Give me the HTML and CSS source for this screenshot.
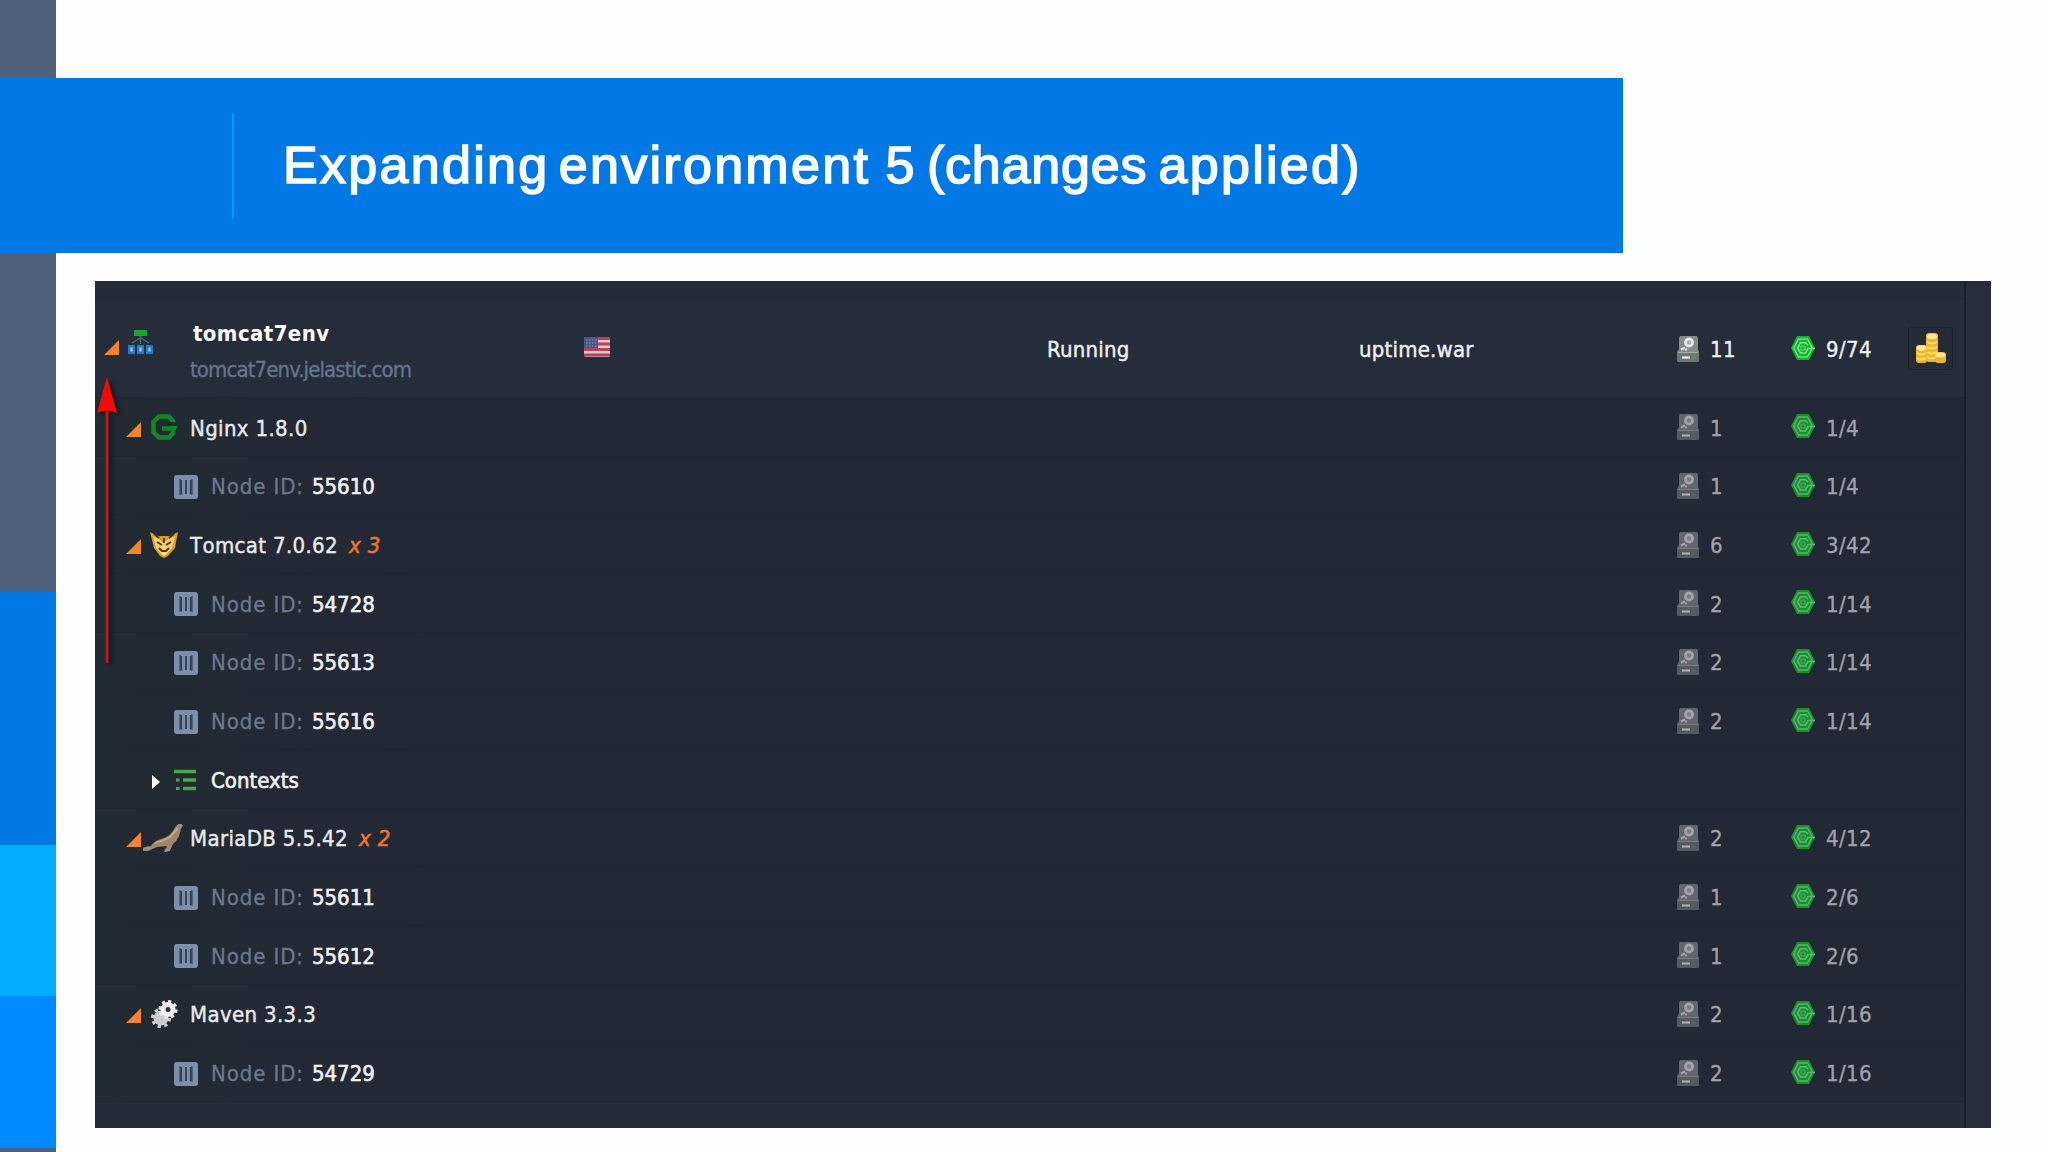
FILE: index.html
```html
<!DOCTYPE html>
<html lang="en">
<head>
  <meta charset="UTF-8" />
  <title>Expanding environment 5 (changes applied)</title>
  <link rel="stylesheet" href="styles.css">
</head>
<body>

  <svg class="defs">
    <symbol id="tri" viewBox="0 0 15 15"><path d="M15 0V15H0Z" fill="#f58426"/></symbol>
    <symbol id="node" viewBox="0 0 24 24">
      <rect width="24" height="24" rx="3" fill="#7d8fa9"/>
      <path d="M5 4H7V18Q7 20 9 20H5ZM19 4H17V18Q17 20 15 20H19Z" fill="#50617c"/>
      <path d="M7.2 5V19M12 5V19M16.8 5V19" stroke="#2f3e57" stroke-width="1.8"/>
    </symbol>
    <symbol id="disk" viewBox="0 0 22 26">
      <path d="M3 0H20L21 2V14L22 16V24Q22 26 20 26H2Q0 26 0 24V16L2 13V2Z" fill="#858a8e"/>
      <path d="M0 16H22V24Q22 26 20 26H2Q0 26 0 24Z" fill="#6f7777"/>
      <circle cx="12" cy="6.5" r="3.6" fill="#aaa" stroke="#e8eaec" stroke-width="2.6"/>
      <path d="M4 13.5L8 11.5M8 13.5H10" stroke="#e8eaec" stroke-width="2"/>
      <path d="M5 21.5H13" stroke="#fff" stroke-width="2"/>
      <path d="M1 16.5H21" stroke="#a5aba8" stroke-width="1"/>
      <path d="M16 21.5H19" stroke="#4e9a5e" stroke-width="2"/>
    </symbol>
    <symbol id="cloudlet" viewBox="0 0 24 24">
      <path d="M6 0H18L24 12L18 24H6L0 12Z" fill="#12b52b"/>
      <path d="M7.5 3H16.5L21.3 12L16.5 21H7.5L2.7 12Z" fill="none" stroke="#6fe07c" stroke-width="1.5"/>
      <path d="M17 9L14.5 6.7H9.5L6.5 12L9.5 17H14.5L17 12.5H24" fill="none" stroke="#7ee58a" stroke-width="1.6"/>
      <circle cx="12" cy="12" r="2.2" fill="none" stroke="#55cf63" stroke-width="1.3"/>
    </symbol>
  </svg>

  <aside class="stripes">
    <div class="stripe-slate"></div>
    <div class="stripe-blue"></div>
    <div class="stripe-cyan"></div>
    <div class="stripe-azure"></div>
  </aside>

  <main>
    <header class="banner">
      <h1>Expanding environment <span class="num">5</span> <span class="tight">(changes</span> applied)</h1>
    </header>

    <section class="panel">
      <div class="list">

        <div class="row env">
          <div class="name">
            <svg class="tri"><use href="#tri"/></svg>
            <svg class="env-icon" viewBox="0 0 25 24">
              <rect x="6" y="0" width="13" height="6" fill="#16a92b"/>
              <path d="M12.5 6V14M12 8L4 13M13 8L21 13" stroke="#5d6875" stroke-width="1.3"/>
              <g fill="#1e7fd2"><rect y="15" width="7" height="9"/><rect x="9" y="15" width="7" height="9"/><rect x="18" y="15" width="7" height="9"/></g>
              <path d="M3.5 17.5V21.5M12.5 17.5V21.5M21.5 17.5V21.5" stroke="#a9d3f3" stroke-width="2"/>
            </svg>
            <div class="env-name">
              <b>tomcat7env</b>
              <span>tomcat7env.jelastic.com</span>
            </div>
          </div>
          <div class="region">
            <svg class="flag" viewBox="0 0 26 20">
              <rect width="26" height="20" rx="2" fill="#e3c5cd"/>
              <path d="M0 1.5H26M0 7H26M0 12.5H26M0 18H26" stroke="#b8405a" stroke-width="2.8"/>
              <rect width="14" height="11" fill="#46598a"/>
              <path d="M2 3H13M2 6H13M2 9H13" stroke="#8292b4" stroke-width="1" stroke-dasharray="1.5 1.5"/>
            </svg>
          </div>
          <div class="status">Running</div>
          <div class="deployed">uptime.war</div>
          <div class="disk"><svg><use href="#disk"/></svg>11</div>
          <div class="cloudlets"><svg><use href="#cloudlet"/></svg>9/74</div>
          <button class="billing">
            <svg viewBox="0 0 30 30">
              <g fill="#edb62f"><rect x="10" y="0" width="12" height="29" rx="3"/><rect x="0" y="12" width="11" height="18" rx="3"/><rect x="19" y="19" width="11" height="11" rx="3"/></g>
              <g fill="#ffe796"><ellipse cx="16" cy="3.5" rx="5" ry="2.7"/><ellipse cx="5.5" cy="15" rx="5" ry="2.7"/><ellipse cx="24.5" cy="22" rx="5" ry="2.5"/></g>
              <path d="M11 9Q16 12 21 9M11 14Q16 17 21 14M11 19Q16 22 21 19M11 24Q16 27 20 24M1 20Q5 23 10 20M1 25Q5 28 10 25" fill="none" stroke="#ffdc71" stroke-width="1.8"/>
            </svg>
          </button>
        </div>

        <div class="row group">
          <div class="name">
            <svg class="tri"><use href="#tri"/></svg>
            <svg class="logo" viewBox="0 0 28 28">
              <path d="M23 9V8L19 3.5H9L3.5 9V19L9 24.5H19L23 20V15.5H12" fill="none" stroke="#0f8a22" stroke-width="4.5"/>
              <path d="M20 13H28L25 18H20Z" fill="#0f8a22"/>
            </svg>
            <span class="label">Nginx 1.8.0</span>
          </div>
          <div class="disk"><svg><use href="#disk"/></svg>1</div>
          <div class="cloudlets"><svg><use href="#cloudlet"/></svg>1/4</div>
        </div>
        <div class="row node">
          <div class="name"><svg><use href="#node"/></svg><span class="key">Node ID:</span><b>55610</b></div>
          <div class="disk"><svg><use href="#disk"/></svg>1</div>
          <div class="cloudlets"><svg><use href="#cloudlet"/></svg>1/4</div>
        </div>

        <div class="row group">
          <div class="name">
            <svg class="tri"><use href="#tri"/></svg>
            <svg class="logo" viewBox="0 0 28 28">
              <path d="M0 1L8 5H20L28 1L25 17L18 25L14 27L10 25L4 17Z" fill="#d99b32"/>
              <path d="M3 5L9 8L13 12L19 8L25 5L22 17L16 24H12L6 17Z" fill="#f3d36d"/>
              <path d="M4 3L9 7M24 3L19 7M7 11L12 14M21 11L16 14M9 17L12 20H16L19 17M14 7V12" stroke="#4b3713" stroke-width="1.8" fill="none"/>
              <path d="M12 22H16L14 25Z" fill="#fff2b0"/>
            </svg>
            <span class="label">Tomcat 7.0.62</span><i>x 3</i>
          </div>
          <div class="disk"><svg><use href="#disk"/></svg>6</div>
          <div class="cloudlets"><svg><use href="#cloudlet"/></svg>3/42</div>
        </div>
        <div class="row node">
          <div class="name"><svg><use href="#node"/></svg><span class="key">Node ID:</span><b>54728</b></div>
          <div class="disk"><svg><use href="#disk"/></svg>2</div>
          <div class="cloudlets"><svg><use href="#cloudlet"/></svg>1/14</div>
        </div>
        <div class="row node">
          <div class="name"><svg><use href="#node"/></svg><span class="key">Node ID:</span><b>55613</b></div>
          <div class="disk"><svg><use href="#disk"/></svg>2</div>
          <div class="cloudlets"><svg><use href="#cloudlet"/></svg>1/14</div>
        </div>
        <div class="row node">
          <div class="name"><svg><use href="#node"/></svg><span class="key">Node ID:</span><b>55616</b></div>
          <div class="disk"><svg><use href="#disk"/></svg>2</div>
          <div class="cloudlets"><svg><use href="#cloudlet"/></svg>1/14</div>
        </div>
        <div class="row contexts">
          <div class="name">
            <svg class="closed" viewBox="0 0 8 14"><path d="M0 0L8 7L0 14Z" fill="#fff"/></svg>
            <svg class="tree" viewBox="0 0 22 22">
              <path d="M0 2.5H22M9 11H22M9 19.5H22" stroke="#4aa93f" stroke-width="3.6"/>
              <path d="M2 11H5.5M2 19.5H5.5" stroke="#4aa93f" stroke-width="3"/>
            </svg>
            <span>Contexts</span>
          </div>
        </div>

        <div class="row group">
          <div class="name">
            <svg class="tri"><use href="#tri"/></svg>
            <svg class="logo seal" viewBox="0 0 40 28">
              <path d="M0 24Q4 22 8 22Q10 18 18 15Q26 13 30 7Q33 1 36 0L40 1L38 5L36 12Q34 17 30 20Q28 24 27 27L21 28L24 22L14 23L5 27H0Z" fill="#a0866b"/>
              <path d="M12 19Q20 17 27 13L35 4" fill="none" stroke="#c9a67e" stroke-width="2"/>
              <path d="M0 25L7 24M22 27L27 24M35 2L39 1" stroke="#8f9297" stroke-width="2.5"/>
            </svg>
            <span class="label">MariaDB 5.5.42</span><i>x 2</i>
          </div>
          <div class="disk"><svg><use href="#disk"/></svg>2</div>
          <div class="cloudlets"><svg><use href="#cloudlet"/></svg>4/12</div>
        </div>
        <div class="row node">
          <div class="name"><svg><use href="#node"/></svg><span class="key">Node ID:</span><b>55611</b></div>
          <div class="disk"><svg><use href="#disk"/></svg>1</div>
          <div class="cloudlets"><svg><use href="#cloudlet"/></svg>2/6</div>
        </div>
        <div class="row node">
          <div class="name"><svg><use href="#node"/></svg><span class="key">Node ID:</span><b>55612</b></div>
          <div class="disk"><svg><use href="#disk"/></svg>1</div>
          <div class="cloudlets"><svg><use href="#cloudlet"/></svg>2/6</div>
        </div>

        <div class="row group">
          <div class="name">
            <svg class="tri"><use href="#tri"/></svg>
            <svg class="logo" viewBox="0 0 28 28">
              <circle cx="11" cy="18" r="7.5" fill="#c9cbcc"/>
              <circle cx="11" cy="18" r="8.6" fill="none" stroke="#c9cbcc" stroke-width="3" stroke-dasharray="3.4 3.35"/>
              <circle cx="18" cy="9.5" r="5" fill="#2a3442" stroke="#eee" stroke-width="5"/>
              <circle cx="18" cy="9.5" r="8.3" fill="none" stroke="#eee" stroke-width="2.6" stroke-dasharray="3.25 3.25"/>
            </svg>
            <span class="label">Maven 3.3.3</span>
          </div>
          <div class="disk"><svg><use href="#disk"/></svg>2</div>
          <div class="cloudlets"><svg><use href="#cloudlet"/></svg>1/16</div>
        </div>
        <div class="row node">
          <div class="name"><svg><use href="#node"/></svg><span class="key">Node ID:</span><b>54729</b></div>
          <div class="disk"><svg><use href="#disk"/></svg>2</div>
          <div class="cloudlets"><svg><use href="#cloudlet"/></svg>1/16</div>
        </div>

      </div>

      <!-- callout arrow -->
      <svg class="arrow" viewBox="0 0 20 286">
        <path d="M10 30V286" stroke="#c5161d" stroke-width="3"/>
        <path d="M10 0L20 36Q10 31 0 36Z" fill="#f80808"/>
      </svg>
    </section>
  </main>

</body>
</html>
```

FILE: styles.css
```css
body {
  margin: 0;
  height: 1152px;
  display: flex;
  overflow: hidden;
  background: #fdfefe;
  font-family: "DejaVu Sans Condensed", "DejaVu Sans", sans-serif;
}
svg {
  display: block;
  flex: none;
}
.defs {
  position: absolute;
  width: 0;
  height: 0;
}

/* left colour strip */
.stripes {
  width: 55.5px;
  flex: none;
  background: #50617b;
}
.stripe-slate { height: 592px; }
.stripe-blue  { height: 253px; background: #0078e6; }
.stripe-cyan  { height: 151px; background: #00adff; }
.stripe-azure { height: 152px; background: #008aff; }

main {
  flex: 1;
  padding-top: 77.5px;
}
.banner {
  position: relative;
  width: 1623px;
  height: 175px;
  margin-left: -55.5px;
  padding: 35px 0 34px 231.5px;
  box-sizing: border-box;
  background: #0078e5;
}
h1 {
  margin: 0;
  height: 106px;
  padding-left: 49.5px;
  border-left: 2px solid #009dfc;
  color: #fff;
  font: 52px/104px "Liberation Sans", Arial, sans-serif;
  letter-spacing: 2.3px;
  word-spacing: -7.5px;
  white-space: nowrap;
  -webkit-text-stroke: 1.6px #fff;
}
.num {
  margin: 0 1px 0 6px;
}
.tight {
  margin-right: 2px;
  letter-spacing: 0.8px;
}

.panel {
  position: relative;
  width: 1895.5px;
  height: 846.5px;
  margin: 28.5px 0 0 39.5px;
  box-sizing: border-box;
  padding-top: 17px;
  background: linear-gradient(90deg, transparent 1869px, #171f2b 1869px, #171f2b 1871px, #252e39 1871px), #252c39;
}
.list {
  width: 1869px;
}
.row {
  display: grid;
  grid-template-columns: 1581px 114px 118px 55px;
  align-items: center;
  height: 58.67px;
  padding: 3px 0 0 1px;
  box-sizing: border-box;
  border-bottom: 1px solid #1f2632;
  background: linear-gradient(90deg, #212b33, #232835 330px);
  color: #a0a4aa;
  font-size: 22px;
}
.name,
.disk,
.cloudlets {
  display: flex;
  align-items: center;
  white-space: nowrap;
}
.disk,
.cloudlets {
  letter-spacing: 0.4px;
  -webkit-text-stroke: 0.3px;
}
.tri {
  width: 15px;
  height: 15px;
  margin: 2px 9px 0 0;
}

.env {
  grid-template-columns: 488px 463px 312px 318px 114px 117px 55px;
  height: 100px;
  border-top: 1px solid #202733;
  background: #252d3a;
  color: #f0f1f2;
}
.env .name { padding-left: 8px; }
.env .tri { margin-top: -5px; }
.env-icon {
  width: 25px;
  height: 24px;
  margin: -16px 37px 0 0;
}
.env-name {
  display: flex;
  flex-direction: column;
  padding-top: 4px;
  line-height: 36px;
}
.env-name b {
  padding-left: 3px;
  color: #fff;
  letter-spacing: 0.4px;
}
.env-name span {
  color: #66758f;
  letter-spacing: -0.9px;
  -webkit-text-stroke: 0.3px;
}
.flag {
  width: 26px;
  height: 20px;
  margin-bottom: 5px;
}
.status,
.deployed {
  letter-spacing: 0.2px;
  -webkit-text-stroke: 0.4px;
}

.group .name {
  padding-left: 30px;
  color: #e9ebed;
}
.logo {
  width: 28px;
  height: 28px;
  margin: -2px 12px 0 0;
}
.seal {
  width: 40px;
  margin: -2px 7px 0 -7px;
}
.label {
  letter-spacing: 0.35px;
  font-kerning: none;
  -webkit-text-stroke: 0.4px;
}
.group i {
  margin-left: 11px;
  color: #f0742c;
  letter-spacing: 0.4px;
  -webkit-text-stroke: 0.6px;
}

.node .name {
  padding-left: 78px;
}
.node .name svg {
  width: 24px;
  height: 24px;
  margin-right: 13px;
}
.key {
  margin-right: 8px;
  color: #6b7990;
  letter-spacing: 0.9px;
  -webkit-text-stroke: 0.3px;
}
.node b {
  color: #f0f2f4;
  font-weight: normal;
  -webkit-text-stroke: 0.6px;
}

.contexts .name {
  padding-left: 56px;
  color: #f0f2f4;
}
.contexts .name span {
  -webkit-text-stroke: 0.6px;
}
.closed {
  width: 8px;
  height: 14px;
  margin: 3px 14px 0 0;
}
.tree {
  width: 22px;
  height: 22px;
  margin-right: 15px;
}

.disk svg {
  width: 22px;
  height: 26px;
  margin: 0 11px 2px 0;
}
.cloudlets svg {
  width: 24px;
  height: 24px;
  margin: 0 11px 4px 0;
}
.row:not(.env) .disk svg { opacity: .65; }
.row:not(.env) .cloudlets svg { opacity: .75; }

.billing {
  width: 45px;
  height: 43px;
  margin-bottom: 3px;
  padding: 0;
  display: flex;
  align-items: center;
  justify-content: center;
  border: 1px solid #1c2330;
  border-radius: 3px;
  background: #252c38;
}
.billing svg {
  width: 30px;
  height: 30px;
}

.arrow {
  position: absolute;
  left: 2px;
  top: 96px;
  width: 20px;
  height: 286px;
  filter: drop-shadow(3px 2px 2px #0008);
}
```
